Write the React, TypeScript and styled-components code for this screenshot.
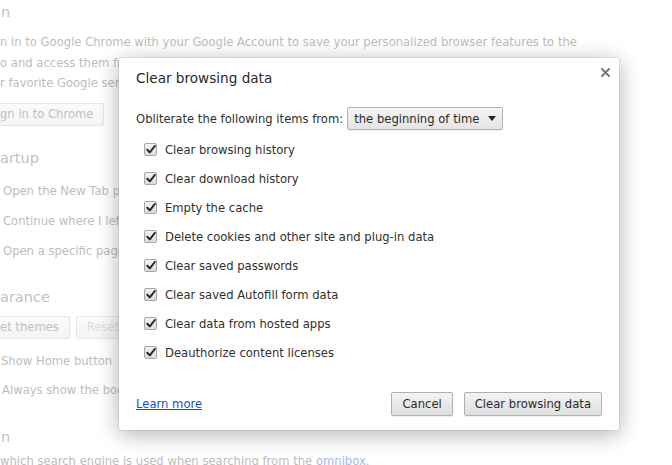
import React from "react";
import styled, { createGlobalStyle } from "styled-components";

const GlobalStyle = createGlobalStyle`
  html, body { margin: 0; padding: 0; background: #ffffff; overflow: hidden; }
  body { font-family: "DejaVu Sans", "Liberation Sans", sans-serif; }
  #root { width: 672px; height: 465px; position: relative; overflow: hidden; }
`;

const FONT = `"DejaVu Sans", "Liberation Sans", sans-serif`;

/* ---------- background settings page ---------- */

const Page = styled.div`
  display: flex;
  flex-direction: column;
  width: 672px;
  height: 465px;
  font-family: ${FONT};
  font-size: 11.6px;
  color: #bdbdbd;
  white-space: nowrap;
`;

const SectionTitle = styled.div<{ $mt: number; $indent?: number }>`
  margin-top: ${(p) => p.$mt}px;
  padding-left: ${(p) => p.$indent ?? 0}px;
  height: 24px;
  line-height: 24px;
  font-size: 14.5px;
  color: #c2c2c2;
`;

const Paragraph = styled.div<{ $mt: number }>`
  margin-top: ${(p) => p.$mt}px;
  line-height: 20.5px;
`;

const GhostButton = styled.div<{ $disabled?: boolean }>`
  height: 23px;
  box-sizing: border-box;
  display: flex;
  align-items: center;
  padding: 0 10px 0 0;
  border: 1px solid #e6e6e6;
  border-left: none;
  border-radius: 0 2px 2px 0;
  background: linear-gradient(#fbfbfb, #f4f4f4);
  color: ${(p) => (p.$disabled ? "#dcdcdc" : "#c0c0c0")};
  & + & {
    border-left: 1px solid #e6e6e6;
    border-radius: 2px;
    padding: 0 10px;
  }
`;

const ButtonRow = styled.div<{ $mt: number }>`
  margin-top: ${(p) => p.$mt}px;
  display: flex;
  gap: 6px;
`;

const OptionList = styled.div<{ $mt: number }>`
  margin-top: ${(p) => p.$mt}px;
  display: flex;
  flex-direction: column;
`;

const OptionLine = styled.div<{ $h: number; $indent: number }>`
  height: ${(p) => p.$h}px;
  line-height: ${(p) => p.$h}px;
  padding-left: ${(p) => p.$indent}px;
`;

const FadedLink = styled.span`
  color: #a9b9ec;
`;

/* ---------- dialog ---------- */

const Dialog = styled.div`
  position: absolute;
  left: 119px;
  top: 58px;
  width: 500px;
  height: 372px;
  box-sizing: border-box;
  background: #ffffff;
  border-radius: 3px;
  box-shadow: 0 0 0 1px rgba(0, 0, 0, 0.06), 0 4px 22px rgba(0, 0, 0, 0.32);
  padding: 0 17px;
  display: flex;
  flex-direction: column;
  font-family: ${FONT};
  font-size: 11.6px;
  color: #303030;
`;

const Title = styled.div`
  height: 40px;
  line-height: 40px;
  font-size: 13.6px;
  color: #2a2a2a;
`;

const CloseButton = styled.div`
  position: absolute;
  top: 9px;
  right: 9px;
  width: 10px;
  height: 10px;
  display: flex;
  align-items: center;
  justify-content: center;
`;

const FromRow = styled.div`
  margin-top: 9px;
  height: 23px;
  display: flex;
  align-items: center;
  gap: 4px;
`;

const Select = styled.div`
  height: 23px;
  box-sizing: border-box;
  display: flex;
  align-items: center;
  gap: 9px;
  padding: 0 6px 0 6px;
  border: 1px solid #b4b4b4;
  border-radius: 2px;
  background: linear-gradient(#f5f5f5, #e4e4e4);
  color: #2a2a2a;
  box-shadow: 0 1px 0 rgba(0, 0, 0, 0.05);
`;

const Checklist = styled.div`
  margin-top: 5px;
  display: flex;
  flex-direction: column;
  padding-left: 8px;
`;

const CheckRow = styled.label`
  height: 29px;
  display: flex;
  align-items: center;
  gap: 8px;
`;

const Box = styled.span`
  width: 13px;
  height: 13px;
  box-sizing: border-box;
  border: 1px solid #a6a6a6;
  border-radius: 2px;
  background: linear-gradient(#f2f2f2, #dcdcdc);
  display: flex;
  align-items: center;
  justify-content: center;
`;

const Footer = styled.div`
  margin-top: 25px;
  height: 24px;
  display: flex;
  align-items: center;
`;

const LearnMore = styled.a`
  color: #1a4fc9;
  text-decoration: underline;
  flex: 1;
`;

const DialogButton = styled.button`
  height: 24px;
  box-sizing: border-box;
  padding: 0 10px;
  margin-left: 11px;
  border: 1px solid #b0b0b0;
  border-radius: 2px;
  background: linear-gradient(#f3f3f3, #dfdfdf);
  box-shadow: 0 1px 0 rgba(0, 0, 0, 0.06);
  font-family: ${FONT};
  font-size: 11.6px;
  color: #2a2a2a;
`;

const Check = () => (
  <svg width="10" height="9" viewBox="0 0 10 9">
    <path
      d="M1.3 4.8 L3.8 7.4 L8.8 1"
      fill="none"
      stroke="#262626"
      strokeWidth="2"
      strokeLinecap="round"
      strokeLinejoin="round"
    />
  </svg>
);

const items = [
  "Clear browsing history",
  "Clear download history",
  "Empty the cache",
  "Delete cookies and other site and plug-in data",
  "Clear saved passwords",
  "Clear saved Autofill form data",
  "Clear data from hosted apps",
  "Deauthorize content licenses",
];

export default function App() {
  return (
    <>
      <GlobalStyle />
      <Page>
        <SectionTitle $mt={0} $indent={1}>n</SectionTitle>
        <Paragraph $mt={8}>
          n in to Google Chrome with your Google Account to save your personalized browser features to the
          <br />
          o and access them from any computer. You&apos;ll also be automatically signed in to
          <br />
          r favorite Google services.
        </Paragraph>
        <ButtonRow $mt={9}>
          <GhostButton>gn in to Chrome</GhostButton>
        </ButtonRow>
        <SectionTitle $mt={20}>artup</SectionTitle>
        <OptionList $mt={6}>
          <OptionLine $h={30} $indent={3}>Open the New Tab page</OptionLine>
          <OptionLine $h={30} $indent={3}>Continue where I left off</OptionLine>
          <OptionLine $h={30} $indent={3}>Open a specific page or set of pages.</OptionLine>
        </OptionList>
        <SectionTitle $mt={19}>arance</SectionTitle>
        <ButtonRow $mt={7}>
          <GhostButton>et themes</GhostButton>
          <GhostButton $disabled>Reset to default theme</GhostButton>
        </ButtonRow>
        <OptionList $mt={8}>
          <OptionLine $h={29} $indent={1}>Show Home button</OptionLine>
          <OptionLine $h={29} $indent={2}>Always show the bookmarks bar</OptionLine>
        </OptionList>
        <SectionTitle $mt={20} $indent={1}>n</SectionTitle>
        <Paragraph $mt={2}>
          which search engine is used when searching from the <FadedLink>omnibox</FadedLink>.
        </Paragraph>
      </Page>

      <Dialog>
        <CloseButton>
          <svg width="9" height="9" viewBox="0 0 9 9">
            <path d="M1 1 L8 8 M8 1 L1 8" stroke="#7a7a7a" strokeWidth="2" strokeLinecap="square" />
          </svg>
        </CloseButton>
        <Title>Clear browsing data</Title>
        <FromRow>
          <span>Obliterate the following items from:</span>
          <Select>
            <span>the beginning of time</span>
            <svg width="8" height="5" viewBox="0 0 8 5">
              <path d="M0 0 H8 L4 5 Z" fill="#222" />
            </svg>
          </Select>
        </FromRow>
        <Checklist>
          {items.map((t) => (
            <CheckRow key={t}>
              <Box>
                <Check />
              </Box>
              <span>{t}</span>
            </CheckRow>
          ))}
        </Checklist>
        <Footer>
          <LearnMore href="#">Learn more</LearnMore>
          <DialogButton>Cancel</DialogButton>
          <DialogButton>Clear browsing data</DialogButton>
        </Footer>
      </Dialog>
    </>
  );
}
